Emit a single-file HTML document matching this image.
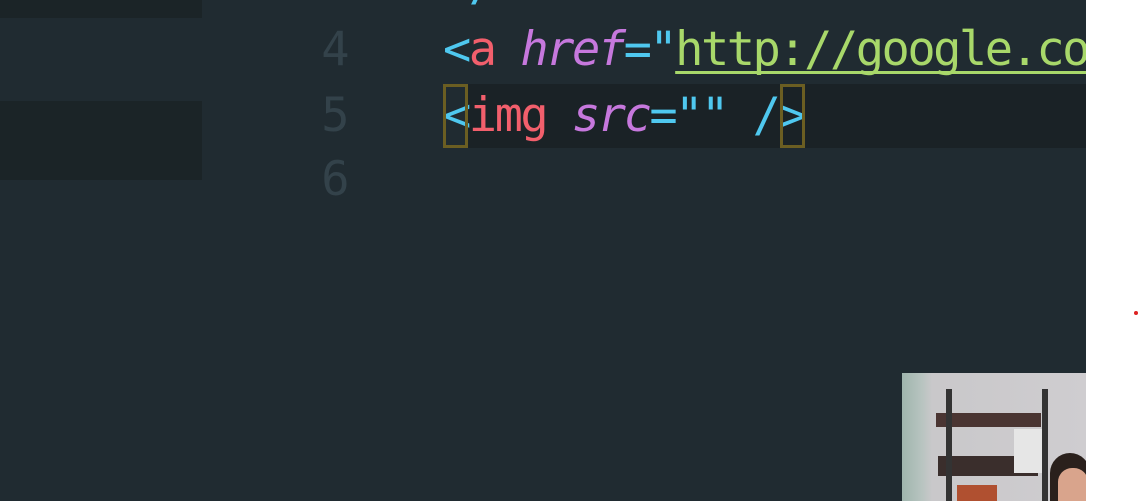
<!DOCTYPE html>
<html><head><style>
body{margin:0;width:1140px;height:501px;background:#202b31;overflow:hidden;position:relative;font-family:"DejaVu Sans Mono","Liberation Mono",monospace;}
.p{position:absolute;background:#1b2427}
.ln{position:absolute;left:297px;width:50px;text-align:right;color:#33424a;font-size:47px;letter-spacing:-2.5px;line-height:64px}
.code{position:absolute;left:443px;font-size:47px;letter-spacing:-2.5px;line-height:64px;white-space:pre;color:#d0d0d0}
.b{color:#4fc8ef}.t{color:#f25f6c}.a{color:#c678dd;font-style:italic}.s{color:#a8d86a}
.u{text-decoration:underline;text-decoration-thickness:3px;text-underline-offset:6px;text-decoration-skip-ink:none}
.box{position:absolute;border:3px solid #6b5e22;box-sizing:border-box}
</style></head><body>
<div class="p" style="left:0;top:0;width:202px;height:18px"></div>
<div class="p" style="left:0;top:101px;width:202px;height:79px"></div>
<div class="p" style="left:468px;top:84px;width:618px;height:64px;background:#1a2226"></div>
<div class="ln" style="top:-49px">3</div>
<div class="ln" style="top:18px">4</div>
<div class="ln" style="top:84px">5</div>
<div class="ln" style="top:148px">6</div>
<div class="code" style="top:-47px"><span class="b">&lt;/h1&gt;</span></div>
<div class="code" style="top:18px"><span class="b">&lt;</span><span class="t">a</span> <span class="a">href</span><span class="b">="</span><span class="s u">http://google.com</span></div>
<div class="code" style="top:84px"><span class="b">&lt;</span><span class="t">img</span> <span class="a">src</span><span class="b">=""</span> <span class="b">/&gt;</span></div>
<div class="box" style="left:443px;top:84px;width:25px;height:64px"></div>
<div class="box" style="left:780px;top:84px;width:25px;height:64px"></div>
<div style="position:absolute;left:1086px;top:0;width:54px;height:501px;background:#fff"></div>
<div style="position:absolute;left:1134px;top:311px;width:4px;height:4px;border-radius:2px;background:#d22"></div>
<div style="position:absolute;left:902px;top:373px;width:184px;height:128px;background:linear-gradient(90deg,#9fb5ad 0,#b8c4c0 20px,#c9c8ca 30px,#cfcdd0 100%);overflow:hidden">
<div style="position:absolute;left:34px;top:40px;width:105px;height:14px;background:#4a3532"></div>
<div style="position:absolute;left:36px;top:83px;width:100px;height:20px;background:#3a2e2c"></div>
<div style="position:absolute;left:44px;top:16px;width:6px;height:112px;background:#333"></div>
<div style="position:absolute;left:140px;top:16px;width:6px;height:112px;background:#333"></div>
<div style="position:absolute;left:112px;top:56px;width:28px;height:44px;background:#e6e6e6"></div>
<div style="position:absolute;left:55px;top:112px;width:40px;height:16px;background:#b05030"></div>
<div style="position:absolute;left:148px;top:80px;width:40px;height:48px;border-radius:20px 20px 0 0;background:#2a201c"></div>
<div style="position:absolute;left:156px;top:95px;width:30px;height:33px;border-radius:14px 14px 0 0;background:#d9a48c"></div>
</div>
</body></html>
